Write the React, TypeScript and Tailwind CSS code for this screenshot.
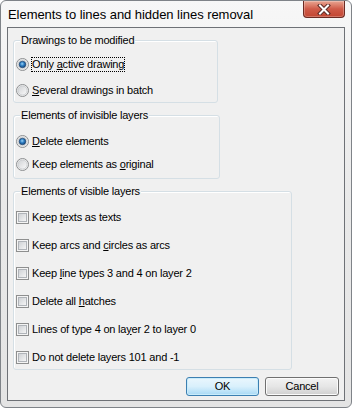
import { useId, type ReactNode } from "react";

const font = "font-['Liberation_Sans',Arial,sans-serif]";

const Radio = ({ checked }: { checked?: boolean }) => {
  const id = useId();
  return (
    <svg width="13" height="13" viewBox="0 0 13 13" className="shrink-0">
      <defs>
        <linearGradient id={`${id}r`} x1="0" y1="0" x2="1" y2="1">
          <stop offset="0" stopColor="#cfd1d4" />
          <stop offset="1" stopColor="#fbfbfb" />
        </linearGradient>
        <radialGradient id={`${id}d`} cx="0.45" cy="0.4" r="0.6">
          <stop offset="0" stopColor="#9ad3f7" />
          <stop offset="0.5" stopColor="#2b7bc0" />
          <stop offset="1" stopColor="#17457a" />
        </radialGradient>
      </defs>
      <circle cx="6.5" cy="6.5" r="6" fill="#f4f4f4" stroke="#8c8e90" />
      <circle cx="6.5" cy="6.5" r="4.6" fill={`url(#${id}r)`} stroke="#c3c6c9" strokeWidth="0.8" />
      {checked && <circle cx="6.5" cy="6.5" r="3.3" fill={`url(#${id}d)`} stroke="#1a3f6a" strokeWidth="0.6" />}
    </svg>
  );
};

const Check = () => {
  const id = useId();
  return (
    <svg width="13" height="13" viewBox="0 0 13 13" className="shrink-0">
      <defs>
        <linearGradient id={`${id}c`} x1="0" y1="0" x2="1" y2="1">
          <stop offset="0" stopColor="#cdd0d4" />
          <stop offset="1" stopColor="#f7f7f7" />
        </linearGradient>
      </defs>
      <rect x="0.5" y="0.5" width="12" height="12" fill="#f4f4f4" stroke="#8e8f8f" />
      <rect x="2.5" y="2.5" width="8" height="8" fill={`url(#${id}c)`} stroke="#b0b4b9" />
    </svg>
  );
};

const Row = ({ icon, children }: { icon: ReactNode; children: ReactNode }) => (
  <div className="flex items-center h-[13px] pl-[2px] gap-[3px]">
    {icon}
    <span className="leading-[13px] whitespace-nowrap">{children}</span>
  </div>
);

const Group = ({ label, className, children }: { label: string; className: string; children: ReactNode }) => (
  <div className={`relative ml-[5px] border border-[#d5dfe5] rounded-[3px] shadow-[inset_1px_1px_0_#fff] flex flex-col ${className}`}>
    <span className="absolute top-[-7px] left-[6px] px-[1px] bg-[#f0f0f0] leading-[13px] whitespace-nowrap">{label}</span>
    {children}
  </div>
);

const U = ({ children }: { children: ReactNode }) => <span className="underline underline-offset-[1px]">{children}</span>;

export default function App() {
  return (
    <div className="w-[352px] h-[408px] bg-white">
      <div className="w-[352px] h-[408px] rounded-[6px] border border-[#7f8388] bg-gradient-to-b from-[#f7f7f7] via-[#e9e9e9] to-[#e4e4e4] flex flex-col">
        <div className="h-[26px] flex justify-between items-start shrink-0">
          <div className={`pl-[7px] pt-[6px] text-[13px] leading-[15px] text-black tracking-[-0.05px] ${font}`}>
            Elements to lines and hidden lines removal
          </div>
          <div className="mr-[6px] w-[42px] h-[17px] rounded-b-[4px] border border-t-0 border-[#6b2a22] bg-gradient-to-b from-[#e8a592] via-[#cf5a48] to-[#c24632] shadow-[inset_0_0_0_1px_rgba(255,255,255,0.25)] flex items-center justify-center">
            <svg width="14" height="11" viewBox="0 0 14 11">
              <path d="M3 1.5 L11 9.5 M11 1.5 L3 9.5" stroke="#5b2b26" strokeWidth="4" strokeLinecap="square" />
              <path d="M3 1.5 L11 9.5 M11 1.5 L3 9.5" stroke="#ffffff" strokeWidth="2" strokeLinecap="square" />
            </svg>
          </div>
        </div>
        <div className={`mx-[6px] h-[374px] border border-[#6e7176] bg-[#f0f0f0] flex flex-col text-[11px] text-black tracking-[-0.2px] ${font}`}>
          <Group label="Drawings to be modified" className="mt-[12px] w-[205px] h-[63px] pt-[17px] gap-[13px]">
            <div className="flex items-center h-[13px] pl-[2px] gap-[3px]">
              <Radio checked />
              <span className="leading-[13px] whitespace-nowrap outline-1 outline-dotted outline-black outline-offset-0">
                Only <U>a</U>ctive drawing
              </span>
            </div>
            <Row icon={<Radio />}>
              <U>S</U>everal drawings in batch
            </Row>
          </Group>
          <Group label="Elements of invisible layers" className="mt-[12px] w-[207px] h-[64px] pt-[19px] gap-[10px]">
            <Row icon={<Radio checked />}>
              <U>D</U>elete elements
            </Row>
            <Row icon={<Radio />}>
              Keep elements as <U>o</U>riginal
            </Row>
          </Group>
          <Group label="Elements of visible layers" className="mt-[12px] w-[279px] h-[179px] pt-[19px] gap-[15px]">
            <Row icon={<Check />}>
              Keep <U>t</U>exts as texts
            </Row>
            <Row icon={<Check />}>
              Keep arcs and <U>c</U>ircles as arcs
            </Row>
            <Row icon={<Check />}>
              Keep <U>l</U>ine types 3 and 4 on layer 2
            </Row>
            <Row icon={<Check />}>
              Delete all <U>h</U>atches
            </Row>
            <Row icon={<Check />}>
              Lines of type 4 on la<U>y</U>er 2 to layer 0
            </Row>
            <Row icon={<Check />}>Do not delete layers 101 and -1</Row>
          </Group>
          <div className="mt-[7px] flex justify-end gap-[6px] pr-[5px]">
            <button className="w-[73px] h-[19px] rounded-[3px] border border-[#3c7fb1] bg-gradient-to-b from-[#eaf6fd] via-[#d9f0fc] to-[#a7d9f5] shadow-[inset_0_0_0_1px_#c9ecfb] leading-[15px] text-[11px]">
              OK
            </button>
            <button className="w-[74px] h-[19px] rounded-[3px] border border-[#707070] bg-gradient-to-b from-[#f2f2f2] via-[#e6e6e6] to-[#cfcfcf] shadow-[inset_0_0_0_1px_#fbfbfb] leading-[15px] text-[11px]">
              Cancel
            </button>
          </div>
        </div>
      </div>
    </div>
  );
}
